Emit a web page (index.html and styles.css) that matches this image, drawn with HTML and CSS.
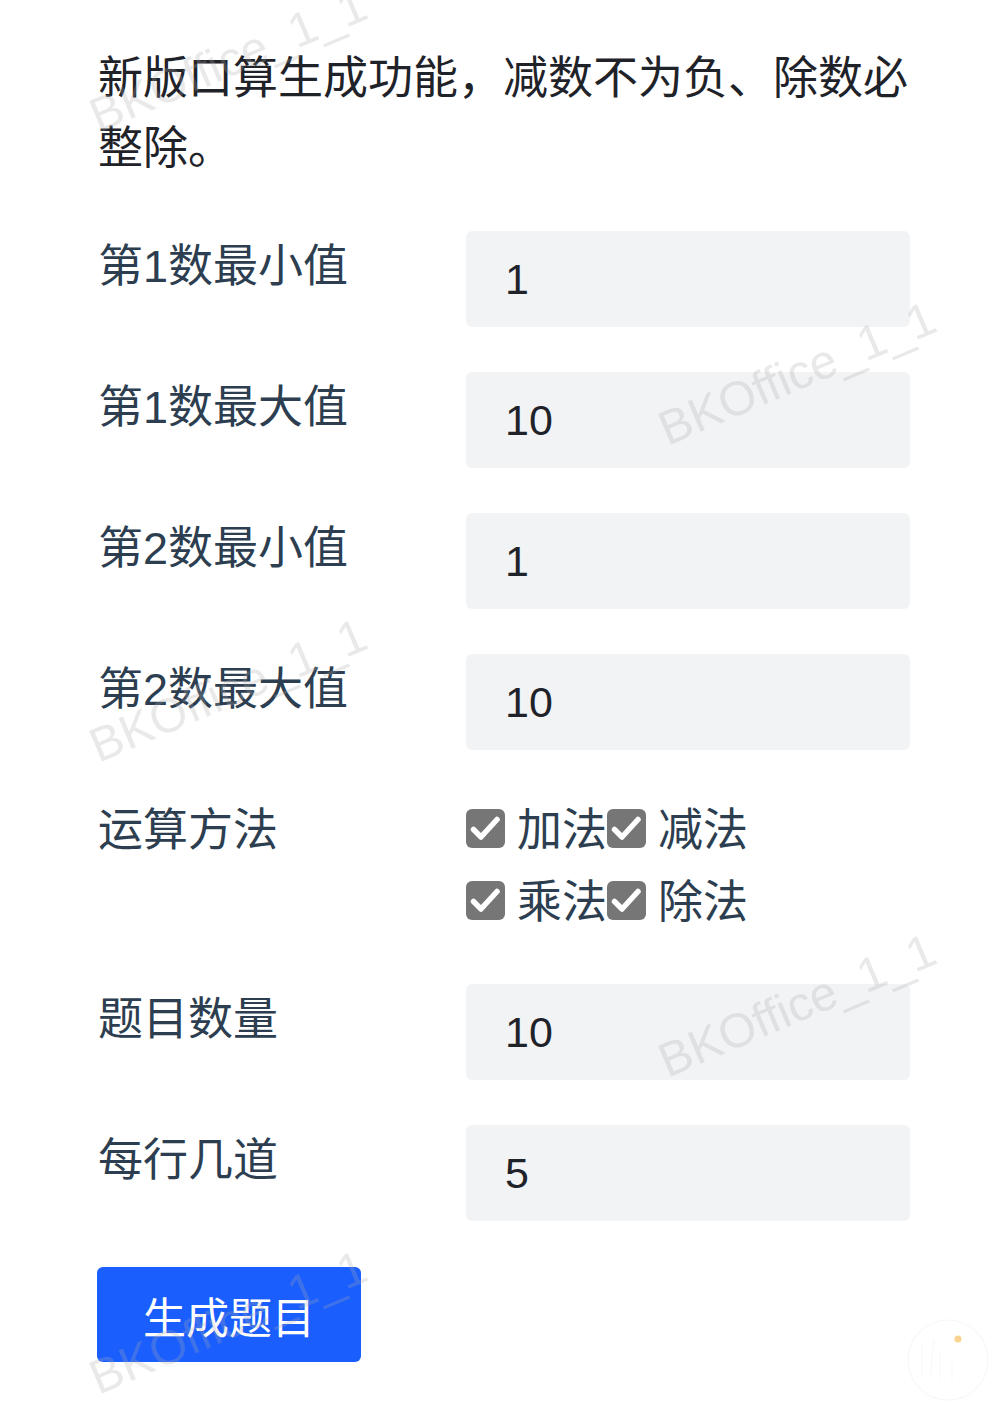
FILE: index.html
```html
<!DOCTYPE html>
<html lang="zh-CN">
<head>
    <meta charset="UTF-8">
    <meta name="viewport" content="width=device-width, initial-scale=1.0">
    <title>口算生成</title>
    <link rel="stylesheet" href="styles.css">
</head>
<body>

    <main class="page">
        <p class="intro">新版口算生成功能，减数不为负、除数必整除。</p>

        <form class="form">
            <div class="row">
                <label class="label">第1数最小值</label>
                <input class="field" type="text" value="1">
            </div>
            <div class="row">
                <label class="label">第1数最大值</label>
                <input class="field" type="text" value="10">
            </div>
            <div class="row">
                <label class="label">第2数最小值</label>
                <input class="field" type="text" value="1">
            </div>
            <div class="row">
                <label class="label">第2数最大值</label>
                <input class="field" type="text" value="10">
            </div>
            <div class="row">
                <label class="label">运算方法</label>
                <div class="ops">
                    <span class="op"><span class="box"><svg viewBox="0 0 39 39"><path d="M7.5 20.5 L15 28 L31 10.5"/></svg></span>加法</span>
                    <span class="op"><span class="box"><svg viewBox="0 0 39 39"><path d="M7.5 20.5 L15 28 L31 10.5"/></svg></span>减法</span>
                    <span class="op"><span class="box"><svg viewBox="0 0 39 39"><path d="M7.5 20.5 L15 28 L31 10.5"/></svg></span>乘法</span>
                    <span class="op"><span class="box"><svg viewBox="0 0 39 39"><path d="M7.5 20.5 L15 28 L31 10.5"/></svg></span>除法</span>
                </div>
            </div>
            <div class="row">
                <label class="label">题目数量</label>
                <input class="field" type="text" value="10">
            </div>
            <div class="row">
                <label class="label">每行几道</label>
                <input class="field" type="text" value="5">
            </div>
            <div class="actions">
                <button class="btn" type="button">生成题目</button>
            </div>
        </form>
    </main>

    <!-- watermark layer -->
    <div class="watermarks">
        <span class="mark" style="left: 228px; top: 60px;">BKOffice_1_1</span>
        <span class="mark" style="left: 797px; top: 373px;">BKOffice_1_1</span>
        <span class="mark" style="left: 228px; top: 690px;">BKOffice_1_1</span>
        <span class="mark" style="left: 797px; top: 1005px;">BKOffice_1_1</span>
        <span class="mark" style="left: 228px; top: 1322px;">BKOffice_1_1</span>
    </div>

    <svg class="corner-logo" viewBox="0 0 100 100" width="100" height="100">
        <circle cx="48" cy="50" r="40" fill="none" stroke="#f7f7f7" stroke-width="1.2"/>
        <path d="M22 32 L22 66 M34 30 L30 68 M40 44 L40 68 M52 52 L52 70" fill="none" stroke="#f8f8f8" stroke-width="1.2"/>
        <circle cx="58" cy="29" r="3.5" fill="#fbd28f"/>
    </svg>

</body>
</html>
```

FILE: styles.css
```css
/* General */
body {
    margin: 0;
    padding: 0;
    background: #fff;
    font-family: "Liberation Sans", "Noto Sans CJK SC", sans-serif;
    color: #2c3e50;
    overflow: hidden;
}

.page {
    width: 812px;
    padding: 44px 0 0 98px;
}

/* Intro text */
.intro {
    margin: 0 0 47px;
    font-size: 45px;
    line-height: 70px;
    color: #1f2329;
}

/* Form */
.form {
    display: flex;
    flex-direction: column;
    gap: 45px;
}

.row {
    display: flex;
    align-items: flex-start;
}

.label {
    width: 368px;
    flex-shrink: 0;
    font-size: 45px;
    line-height: 72px;
}

.field {
    width: 444px;
    height: 96px;
    box-sizing: border-box;
    padding: 0 0 0 39px;
    border: none;
    border-radius: 6px;
    background: #f2f3f5;
    font-family: "Liberation Sans", "Noto Sans CJK SC", sans-serif;
    font-size: 43px;
    color: #1f2329;
    outline: none;
}

/* Operation checkboxes */
.ops {
    display: grid;
    grid-template-columns: auto auto;
    justify-content: start;
}

.op {
    display: flex;
    align-items: center;
    height: 72px;
    font-size: 45px;
    line-height: 72px;
}

.box {
    width: 39px;
    height: 39px;
    margin: 0 12px 6px 0;
    border-radius: 6px;
    background: #767676;
    display: flex;
}

.box svg {
    width: 39px;
    height: 39px;
}

.box path {
    fill: none;
    stroke: #fff;
    stroke-width: 5.5;
    stroke-linecap: round;
    stroke-linejoin: round;
}

/* Button */
.actions {
    padding-top: 1px;
}

.btn {
    width: 264px;
    height: 95px;
    margin-left: -1px;
    border: none;
    border-radius: 6px;
    background: #1a5efe;
    color: #fff;
    font-family: "Liberation Sans", "Noto Sans CJK SC", sans-serif;
    font-size: 43px;
    cursor: pointer;
}

/* Watermark */
.watermarks {
    position: fixed;
    inset: 0;
    pointer-events: none;
}

.mark {
    position: absolute;
    transform: translate(-50%, -50%) rotate(-23deg);
    font-family: "Liberation Sans", sans-serif;
    font-size: 48px;
    white-space: nowrap;
    color: rgba(170, 170, 170, 0.26);
}

.corner-logo {
    position: fixed;
    left: 900px;
    top: 1310px;
    pointer-events: none;
}
```
